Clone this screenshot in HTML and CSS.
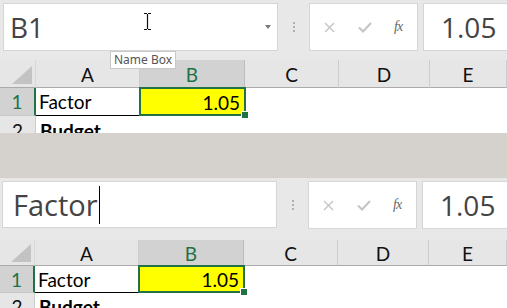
FILE: index.html
```html
<!DOCTYPE html>
<html lang="en">
<head>
  <meta charset="UTF-8" />
  <title>Name Box</title>
  <link rel="stylesheet" href="styles.css">
</head>
<body>
  <div class="panel">
    <div class="fbar">
      <div class="namebox">
        <span class="nb-text">B1</span>
        <svg class="ibeam" width="9" height="17" viewBox="0 0 9 17">
          <path d="M1 0.5h3M5 0.5h3M4.5 1v15M1 16.5h3M5 16.5h3" stroke="#111" stroke-width="1.2" fill="none"/>
        </svg>
        <span class="nb-arrow"></span>
      </div>
      <div class="grip"><i></i><i></i><i></i></div>
      <div class="fx-box">
        <svg class="fx-icon" width="11" height="11" viewBox="0 0 11 11">
          <path d="M1 1l9 9M10 1l-9 9" stroke="#c4c4c4" stroke-width="1.4"/>
        </svg>
        <svg class="fx-icon" width="14" height="11" viewBox="0 0 14 11">
          <path d="M1 5.5l4 4 8-8.5" stroke="#c4c4c4" stroke-width="2" fill="none"/>
        </svg>
        <span class="fx-label">fx</span>
      </div>
      <div class="value-box">1.05</div>
    </div>
    <div class="sheet">
      <div class="hd corner"><span class="tri"></span></div>
      <div class="hd">A</div>
      <div class="hd sel">B</div>
      <div class="hd">C</div>
      <div class="hd">D</div>
      <div class="hd">E</div>

      <div class="rh sel">1</div>
      <div class="cell label">Factor</div>
      <div class="cell num active">1.05</div>
      <div class="cell"></div>
      <div class="cell"></div>
      <div class="cell"></div>

      <div class="rh">2</div>
      <div class="cell bold">Budget</div>
      <div class="cell"></div>
      <div class="cell"></div>
      <div class="cell"></div>
      <div class="cell"></div>
    </div>
    <div class="tooltip">Name Box</div>
  </div>

  <div class="divider"></div>

  <div class="panel panel--edit">
    <div class="fbar">
      <div class="namebox">
        <span class="nb-text">Factor</span><span class="caret"></span>
      </div>
      <div class="grip"><i></i><i></i><i></i></div>
      <div class="fx-box">
        <svg class="fx-icon" width="11" height="11" viewBox="0 0 11 11">
          <path d="M1 1l9 9M10 1l-9 9" stroke="#c4c4c4" stroke-width="1.4"/>
        </svg>
        <svg class="fx-icon" width="14" height="11" viewBox="0 0 14 11">
          <path d="M1 5.5l4 4 8-8.5" stroke="#c4c4c4" stroke-width="2" fill="none"/>
        </svg>
        <span class="fx-label">fx</span>
      </div>
      <div class="value-box">1.05</div>
    </div>
    <div class="sheet">
      <div class="hd corner"><span class="tri"></span></div>
      <div class="hd">A</div>
      <div class="hd sel">B</div>
      <div class="hd">C</div>
      <div class="hd">D</div>
      <div class="hd">E</div>

      <div class="rh sel">1</div>
      <div class="cell label">Factor</div>
      <div class="cell num active">1.05</div>
      <div class="cell"></div>
      <div class="cell"></div>
      <div class="cell"></div>

      <div class="rh">2</div>
      <div class="cell bold">Budget</div>
      <div class="cell"></div>
      <div class="cell"></div>
      <div class="cell"></div>
      <div class="cell"></div>
    </div>
  </div>
</body>
</html>
```

FILE: styles.css
```css
* {
  box-sizing: border-box;
}

body {
  margin: 0;
  width: 507px;
  height: 308px;
  overflow: hidden;
  background: #e8e8e8;
  font-family: Lato, "Liberation Sans", sans-serif;
}

.panel {
  position: relative;
  height: 133px;
  overflow: hidden;
  background: #e8e8e8;
}

.panel--edit {
  height: 130px;
}

.divider {
  height: 45px;
  background: #d5d1cc;
}

/* formula bar */
.fbar {
  display: flex;
  align-items: flex-start;
  height: 60px;
  padding: 3px 0 0 3px;
}

.namebox,
.fx-box,
.value-box {
  background: #fff;
  border: 1px solid #d6d6d6;
  height: 48px;
}

.namebox {
  position: relative;
  width: 275px;
  display: flex;
  align-items: center;
  padding-left: 6px;
  font-family: "Open Sans", "Noto Sans", sans-serif;
  font-size: 28px;
  color: #444;
}

.ibeam {
  position: absolute;
  left: 139px;
  top: 9px;
}

.nb-arrow {
  position: absolute;
  right: 6px;
  top: 21px;
  border-left: 3.5px solid transparent;
  border-right: 3.5px solid transparent;
  border-top: 4px solid #7a7a7a;
}

.caret {
  display: inline-block;
  width: 1px;
  height: 38px;
  background: #000;
  margin-left: 1px;
}

.grip {
  width: 31px;
  display: flex;
  flex-direction: column;
  align-items: center;
  gap: 2px;
  padding-top: 19px;
}

.grip i {
  width: 2px;
  height: 2px;
  background: #b0b0b0;
}

.fx-box {
  width: 109px;
  display: flex;
  align-items: center;
  padding-left: 14px;
}

.fx-icon {
  margin-right: 23px;
}

.fx-icon + .fx-icon {
  margin-right: 22px;
}

.fx-label {
  font-family: "Liberation Serif", serif;
  font-style: italic;
  font-size: 14px;
  color: #666;
  letter-spacing: -1px;
}

.value-box {
  flex: 1;
  margin-left: 5px;
  margin-right: -4px;
  display: flex;
  align-items: center;
  padding-left: 17px;
  font-family: "Open Sans", "Noto Sans", sans-serif;
  font-size: 28px;
  color: #444;
}

/* sheet grid */
.sheet {
  display: grid;
  grid-template-columns: 36px 104px 105px 94px 91px 1fr;
  grid-template-rows: 28px 28px 28px;
  font-size: 19px;
}

.hd {
  background: #e6e6e6;
  border-bottom: 1px solid #ababab;
  border-right: 1px solid #cdcdcd;
  display: flex;
  align-items: center;
  justify-content: center;
  padding-top: 2px;
  color: #111;
}

.hd.sel {
  background: #d2d2d2;
  color: #217346;
  border-right-color: #bdbdbd;
}

.corner {
  position: relative;
  border-right-color: #d8d8d8;
}

.tri {
  position: absolute;
  right: 3px;
  bottom: 3px;
  border-left: 20px solid transparent;
  border-bottom: 18px solid #c3c3c3;
}

.rh {
  background: #e6e6e6;
  border-right: 1px solid #cdcdcd;
  display: flex;
  align-items: center;
  justify-content: center;
  color: #111;
}

.rh.sel {
  background: #d2d2d2;
  color: #217346;
  border-right: 2px solid #217346;
  border-bottom: 1px solid #c8c8c8;
}

.cell {
  background: #fff;
  display: flex;
  align-items: center;
  padding: 0 4px;
  color: #000;
}

.label {
  border-bottom: 1px solid #000;
  padding-left: 3px;
}

.bold {
  font-weight: bold;
}

.num {
  justify-content: flex-end;
  padding-right: 5px;
}

.active {
  position: relative;
  background: #ffff00;
}

.active::after {
  content: "";
  position: absolute;
  inset: -1px -1px 0 -1px;
  border: 2px solid #217346;
}

.active::before {
  content: "";
  position: absolute;
  right: -4px;
  bottom: -3px;
  width: 6px;
  height: 6px;
  background: #217346;
  border: 1px solid #fff;
  z-index: 1;
}

.tooltip {
  position: absolute;
  left: 110px;
  top: 51px;
  padding: 0 3px;
  background: #fff;
  border: 1px solid #c9c9c9;
  font-family: "Noto Sans", "Open Sans", sans-serif;
  font-size: 12px;
  line-height: 16px;
  color: #555;
}

/* second shot is scaled a touch differently */
.panel--edit .fbar {
  height: 62px;
  padding: 3px 0 0 2px;
}

.panel--edit .namebox {
  height: 47px;
  padding-left: 10px;
  font-size: 29px;
}

.panel--edit .sheet {
  grid-template-columns: 35px 104px 105px 94px 91px 1fr;
  grid-template-rows: 26px 27px 27px;
}
```
